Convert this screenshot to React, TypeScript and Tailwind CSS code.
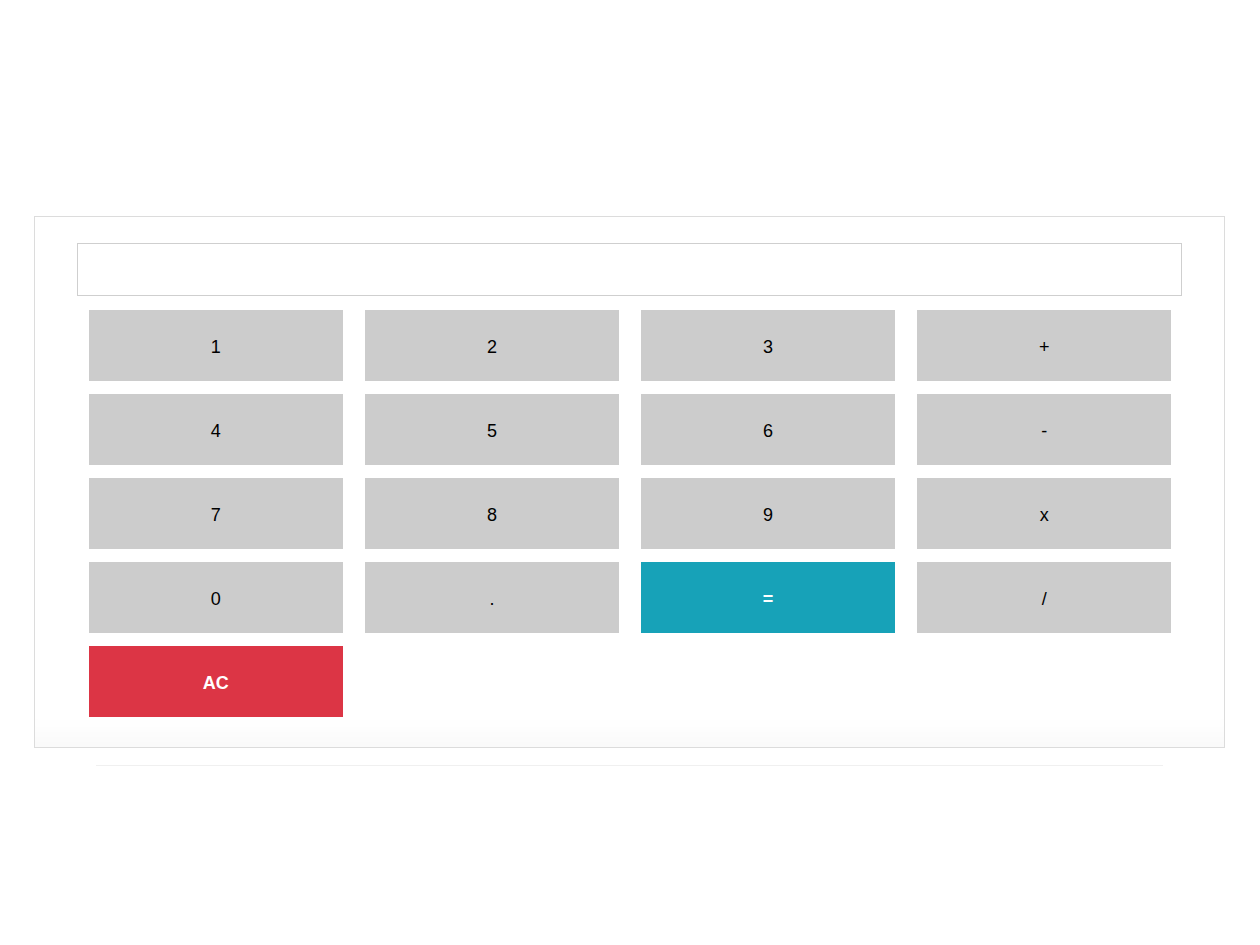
const keys: { label: string; kind?: 'eq' | 'clear' }[] = [
  { label: '1' },
  { label: '2' },
  { label: '3' },
  { label: '+' },
  { label: '4' },
  { label: '5' },
  { label: '6' },
  { label: '-' },
  { label: '7' },
  { label: '8' },
  { label: '9' },
  { label: 'x' },
  { label: '0' },
  { label: '.' },
  { label: '=', kind: 'eq' },
  { label: '/' },
  { label: 'AC', kind: 'clear' },
]

export default function App() {
  return (
    <div className="min-h-[945px] bg-white pt-[216px] pl-[34px] pr-[35px] font-['Liberation_Sans',Arial,sans-serif]">
      <div className="border border-[#dcdcdc] bg-white shadow-[inset_0_-40px_30px_-30px_rgba(0,0,0,0.03)] px-[42px] pt-[26px] pb-[30px]">
        <input
          type="text"
          readOnly
          className="block w-full h-[53px] border border-[#cfcfcf] bg-white outline-none"
        />
        <div className="grid grid-cols-4 gap-x-[22.5px] gap-y-[13px] pl-[12px] pr-[11px] mt-[14px]">
          {keys.map((k) => (
            <button
              key={k.label}
              className={
                k.kind === 'eq'
                  ? 'h-[71px] pt-[4px] bg-[#17a2b8] text-white text-[18px] font-bold'
                  : k.kind === 'clear'
                    ? 'h-[71px] pt-[4px] bg-[#dc3545] text-white text-[18px] font-bold'
                    : 'h-[71px] pt-[4px] bg-[#cccccc] text-black text-[18px]'
              }
            >
              {k.label}
            </button>
          ))}
        </div>
      </div>
      <div className="mx-[62px] mt-[17px] h-px bg-[#f0f0f0]" />
    </div>
  )
}
